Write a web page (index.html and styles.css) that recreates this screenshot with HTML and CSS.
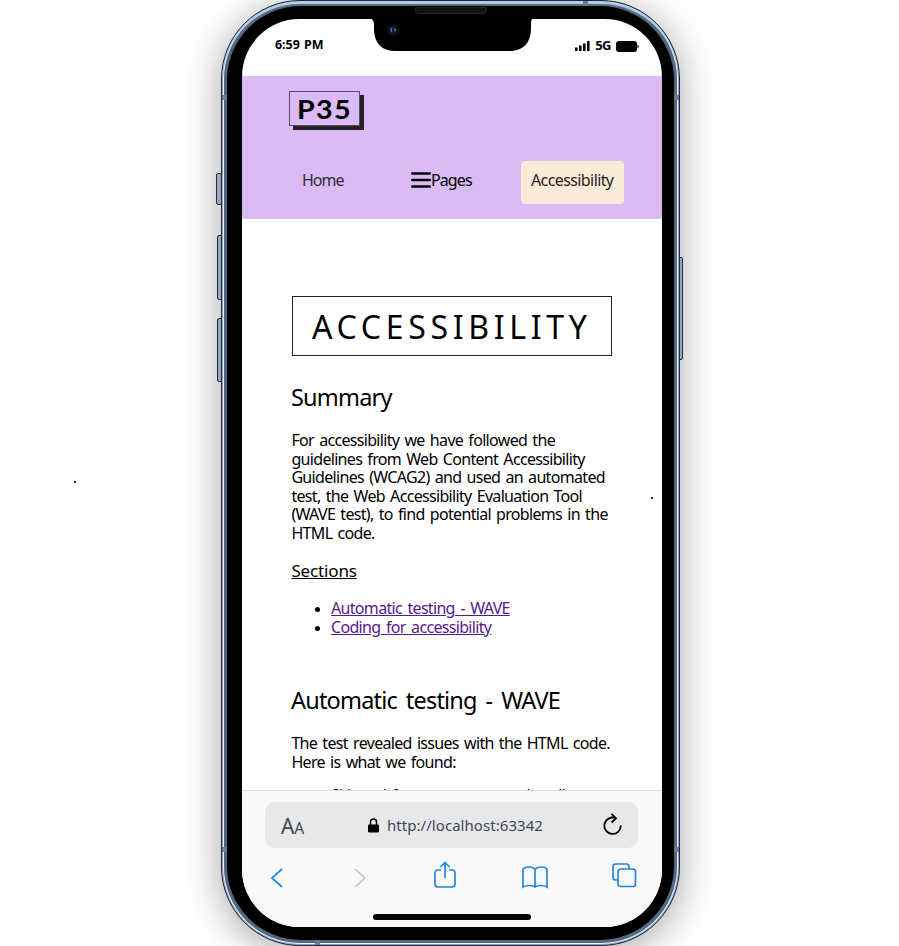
FILE: index.html
```html
<!DOCTYPE html>
<html lang="en">
<head>
<meta charset="utf-8">
<title>Accessibility</title>
<link rel="stylesheet" href="styles.css">
</head>
<body>
<div class="dot dot-left"></div>
<div class="dot dot-right"></div>
<div class="key mute"></div>
<div class="key vol-up"></div>
<div class="key vol-down"></div>
<div class="key power"></div>
<div class="phone">
  <i class="seam s1"></i><i class="seam s2"></i><i class="seam s3"></i><i class="seam s4"></i><i class="seam s5"></i><i class="seam s6"></i>
  <div class="bezel">
    <div class="speaker"></div>
    <div class="screen">
      <svg class="notch" width="166" height="34" viewBox="0 0 166 34"><path d="M0 0Q5 1 5 6V12Q6 32 25 33H143Q161 31 162 12V5Q162 0 166 0Z"/><circle cx="24" cy="12" r="6.500" fill="#090b12"/><circle cx="24" cy="12" r="3.500" fill="#141c3c"/><path d="M22.500 10q-1 2 0 4M26 10.500q.6 1.500 0 3" fill="none" stroke="#6b86c8" stroke-width="1"/></svg>
      <div class="status">
        <span class="time">6:59 PM</span>
        <span class="signal">
          <svg width="15" height="10" viewBox="0 0 15 10"><path d="M0 6.500h2.600V10H0zM4 4.500h2.600V10H4zM8 2.500h2.600V10H8zM12 0h2.600v10H12z"/></svg>
          <b>5G</b>
          <svg width="23" height="11" viewBox="0 0 23 11"><rect width="21" height="11" rx="3"/><path d="M21.500 3.500Q24 5.500 21.500 7.500z"/></svg>
        </span>
      </div>
      <header class="site">
        <div class="logo"><span>P35</span></div>
        <nav>
          <a class="home">Home</a>
          <a class="pages"><svg width="20" height="16" viewBox="0 0 20 16"><path d="M1.200 1.500h17.600M1.200 8h17.600M1.200 14.500h17.600" stroke="#000" stroke-width="2.600" stroke-linecap="round"/></svg>Pages</a>
          <a class="current">Accessibility</a>
        </nav>
      </header>
      <main>
        <h1>ACCESSIBILITY</h1>
        <h2>Summary</h2>
        <p>For accessibility we have followed the<br>guidelines from Web Content Accessibility<br>Guidelines (WCAG2) and used an automated<br>test, the Web Accessibility Evaluation Tool<br>(WAVE test), to find potential problems in the<br>HTML code.</p>
        <p class="sections">Sections</p>
        <ul>
          <li><a>Automatic testing - WAVE</a></li>
          <li><a>Coding for accessibility</a></li>
        </ul>
        <h2 class="testing">Automatic testing - WAVE</h2>
        <p class="found">The test revealed issues with the HTML code.<br>Here is what we found:</p>
        <ul class="cut"><li>Skipped from one to some heading</li></ul>
      </main>
      <footer>
        <div class="address">
          <span class="aa">A<small>A</small></span>
          <span class="url"><svg width="11" height="15" viewBox="0 0 11 15"><path d="M2.500 7V4a3 3 0 0 1 6 0v3" fill="none" stroke="#000" stroke-width="1.500"/><rect y="6.500" width="11" height="8" rx="1.300"/></svg><span>http://localhost:63342</span></span>
          <svg class="reload" width="20" height="24" viewBox="0 0 20 24"><path d="M17.800 12.500A8.200 8.200 0 1 1 13 5.300M8.500 .8L13 5.300 8.500 9.500" fill="none" stroke="#000" stroke-width="1.800"/></svg>
        </div>
        <div class="tools">
          <svg class="back" width="14" height="22" viewBox="0 0 14 22"><path d="M12 2L2 11l10 9"/></svg>
          <svg class="off" width="14" height="22" viewBox="0 0 14 22"><path d="M2 2l10 9-10 9"/></svg>
          <svg class="share" width="22" height="28" viewBox="0 0 22 28"><path d="M7 9H4Q1 9 1 12v11q0 3 3 3h14q3 0 3-3V12q0-3-3-3h-3M11 17V1.500M6.500 6L11 1.500 15.500 6"/></svg>
          <svg class="book" width="28" height="24" viewBox="0 0 28 24"><path d="M14 4.500Q12 2 8 2T2 4V22q2-1.500 6-1.500t6 1.500q2-1.500 6-1.500t6 1.500V4q-2-2-6-2t-6 2.500V22"/></svg>
          <svg class="tabs" width="26" height="26" viewBox="0 0 26 26"><path d="M7 18H4.500Q2 18 2 15.500v-11Q2 2 4.500 2h11Q18 2 18 4.500V7"/><rect x="7" y="7" width="17.500" height="17.500" rx="2.500"/></svg>
        </div>
        <div class="bar"></div>
      </footer>
    </div>
  </div>
</div>
</body>
</html>
```
FILE: styles.css
```css
* { box-sizing: border-box; }
body { margin: 0; width: 899px; height: 946px; overflow: hidden; position: relative; background: #fff; font-family: "Noto Sans", sans-serif; color: #000; }
svg { display: block; flex: none; }
.dot { position: absolute; width: 2px; height: 2px; background: #333; z-index: 4; }
.dot-left { left: 74px; top: 481px; }
.dot-right { left: 651px; top: 497px; }
.phone { width: 459px; height: 946px; margin-left: 221px; padding: 5px; border-radius: 79px; position: relative; background: #53677e; border: 1px solid #20283a; box-shadow: 0 6px 36px 2px rgba(0,0,0,.32), inset 0 3px 1px #b9cce6, inset 0 0 0 1px #8fa3bf, inset 0 0 0 2px #e8f3ff, inset 0 0 0 5px #53677e; }
.bezel { height: 934px; border-radius: 74px; background: #000; padding: 13px 15px 13px; position: relative; }
.screen { width: 420px; height: 908px; border-radius: 57px / 58px; overflow: hidden; background: #fff; position: relative; display: flex; flex-direction: column; }
.speaker { position: absolute; left: 188px; top: 1px; width: 72px; height: 7px; background: #111; border: 1px solid #252525; border-radius: 0 0 4px 4px; }
.notch { position: absolute; left: 127px; top: -1px; }
.key { position: absolute; width: 6px; border: 1px solid #27354d; border-radius: 2px; background: #b5c9e2; }
.mute { left: 216px; top: 173px; height: 32px; }
.vol-up { left: 217px; top: 235px; height: 65px; }
.vol-down { left: 217px; top: 318px; height: 64px; }
.power { left: 678px; top: 257px; width: 5px; height: 103px; }
.seam { position: absolute; background: #69799a; width: 5px; height: 5px; }
.s1, .s2 { top: 94px; }
.s3, .s4 { top: 846px; }
.s1, .s3 { left: 0; }
.s2, .s4 { right: 0; }
.s5 { top: 0; left: 361px; }
.s6 { bottom: 0; left: 93px; }
.status { flex: none; height: 57px; padding: 16px 23px 0 33px; display: flex; justify-content: space-between; }
.time, .signal b { font-size: 12.500px; line-height: 19px; font-weight: 700; }
.time { letter-spacing: -.05px; word-spacing: 1px; }
.signal { display: flex; gap: 5px; align-items: center; height: 22px; }
.signal b { font-size: 13px; letter-spacing: -.5px; height: 21px; }
.site { flex: none; height: 143px; background: #dabbf5; padding: 15px 38px 0 47px; }
.logo { width: 71px; height: 35px; border: 1px solid #5c4770; box-shadow: 4px 4px 0 #222; background: #dabbf5; font: 700 26px/34px Lato, sans-serif; letter-spacing: 1.200px; padding-left: 7px; }
.logo span { display: inline-block; transform: scaleX(1.1); transform-origin: left; }
nav { display: flex; align-items: flex-start; height: 43px; margin-top: 35px; font-size: 16px; line-height: 38px; }
nav a { display: flex; align-items: center; height: 38px; letter-spacing: -.6px; white-space: nowrap; }
.home { width: 122px; padding-left: 13px; color: #332c39; letter-spacing: -1px; }
.pages { width: 110px; letter-spacing: -.9px; }
.current { width: 103px; padding: 0 0 5px 10px; background: #faebd7; border-radius: 4px; color: #28231d; }
nav .current { height: 43px; }
main { flex: none; height: 571px; overflow: hidden; padding: 77px 50px 0; }
h1 { margin: 0; height: 60px; border: 1px solid #222; font-size: 32px; font-weight: 400; line-height: 60px; letter-spacing: 4.700px; padding-left: 19px; white-space: nowrap; }
h2 { margin: 25px 0 0 -1px; font-size: 23.500px; line-height: 32px; font-weight: 400; letter-spacing: -.8px; word-spacing: 3.500px; white-space: nowrap; }
p { margin: 18px 0 0 -.6px; font-size: 16px; line-height: 18.600px; letter-spacing: -.68px; word-spacing: 1.700px; white-space: nowrap; }
.sections { text-decoration: underline; margin-top: 19px; font-size: 17px; letter-spacing: -.15px; }
ul { margin: 19px 0 0; padding-left: 39px; font-size: 16px; line-height: 19px; letter-spacing: -.68px; word-spacing: 2px; white-space: nowrap; }
li::marker { font-size: 13px; }
li a { color: #551a8b; text-decoration: underline; }
.testing { margin-top: 47px; }
.found { margin-top: 18px; }
.cut { margin-top: 15px; }
footer { height: 137px; background: #f9f9f9; border-top: 1px solid #ddd; padding: 11px 24px 0 23px; position: relative; }
.address { width: 373px; height: 46px; border-radius: 10px; background: #e8e8ea; display: flex; align-items: center; color: #3d4757; }
.aa { width: 103px; padding: 2px 0 0 16px; font-size: 21px; letter-spacing: -.3px; }
.aa small { font-size: 15.500px; }
.url { display: flex; gap: 8px; align-items: center; width: 235px; font-size: 15px; white-space: nowrap; }
.url span { letter-spacing: .05px; }
.tools { display: flex; align-items: center; width: 366px; height: 28px; margin: 14px 0 0 5px; fill: none; stroke: #2585db; stroke-width: 1.700; }
.back { margin: 4px 0 0; }
.off { margin: 4px 0 0 69px; stroke: #ccc; }
.share { margin-left: 67px; margin-top: -2px; }
.book { margin-left: 65px; margin-top: 2px; }
.tabs { margin-left: 62px; margin-top: -2px; }
.bar { width: 158px; height: 6px; border-radius: 3px; background: #000; margin: 24px 0 0 108px; }
```
